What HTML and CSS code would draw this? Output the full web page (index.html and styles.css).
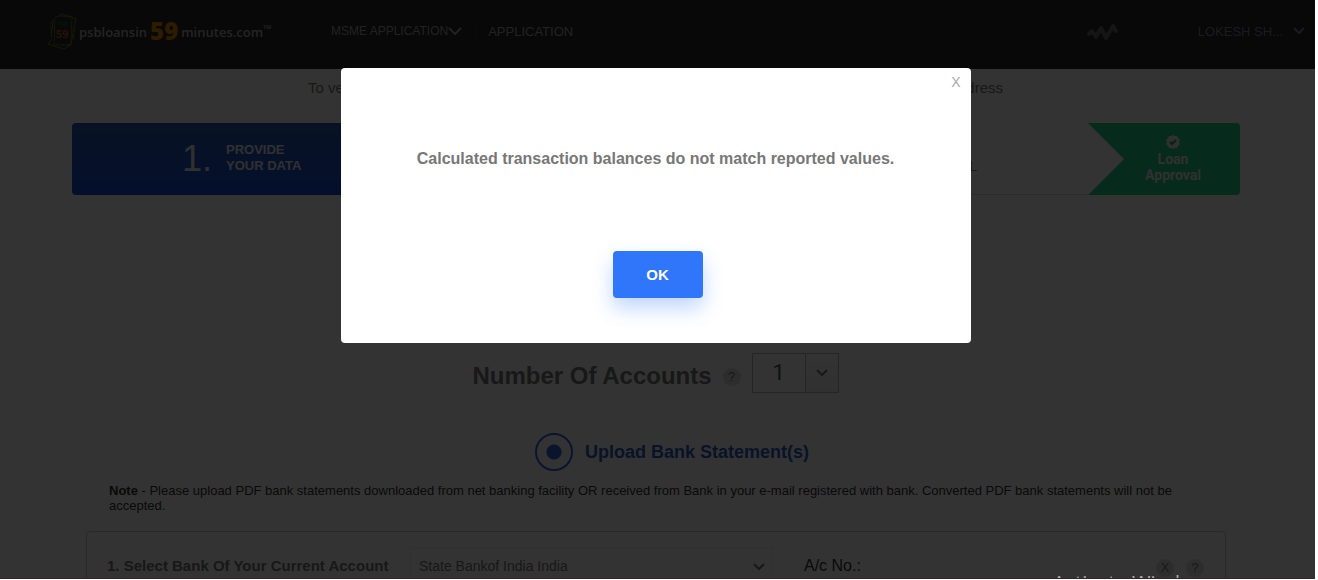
FILE: index.html
```html
<!DOCTYPE html>
<html lang="en">
<head>
<meta charset="utf-8">
<title>psbloansin59minutes.com</title>
<link rel="stylesheet" href="styles.css">
</head>
<body>
<div class="page">
  <header class="topbar">
    <a class="brand" href="#">
      <svg class="brand-mark" viewBox="0 0 30 38" aria-hidden="true">
        <g fill="none" stroke-width="1">
          <path d="M8 4 13 3 25 4 24 33 7 31Z" stroke="#3c7a28"/>
          <path d="M13 3 14 1 25 4 29 6 24 31 20 32M5 26 1 31 17 36 22 33M6 6 4 24" stroke="#7c7820"/>
          <path d="M3 10 4 17M5 9 6 17M26 16 27 28M28 18 26 27" stroke="#80801c" stroke-dasharray="1 2"/>
        </g>
        <text x="16" y="13" class="mark-psb">PSB</text>
        <text x="15" y="25" class="mark-num">59</text>
      </svg>
      <span class="brand-word">psbloansin</span>
      <span class="brand-num">59</span>
      <span class="brand-word">minutes.com<sup class="tm">™</sup></span>
    </a>
    <nav class="menu">
      <a class="menu-main" href="#">MSME APPLICATION<svg class="menu-arrow" viewBox="0 0 14 10" aria-hidden="true"><path d="M1 2 7 8 13 2"/></svg></a>
      <a class="menu-second" href="#">APPLICATION</a>
    </nav>
    <svg class="pulse" viewBox="0 0 32 18" aria-hidden="true"><path d="M3 11 6 8 10 14 15 5 20 15 27 3 30 8"/></svg>
    <button class="user" type="button">LOKESH SH...<svg viewBox="0 0 12 8" aria-hidden="true"><path d="M1 1 6 6 11 1"/></svg></button>
  </header>
  <main>
    <p class="intro"><span>To ve</span><span>dress</span></p>
    <section class="steps">
      <div class="step-provide"><span class="step-no">1.</span><span class="step-name">PROVIDE<br>YOUR DATA</span></div>
      <div class="step-next">L</div>
      <div class="step-loan">
        <svg viewBox="0 0 14 14" aria-hidden="true"><path class="seal" d="M7 0 9 1 11 1 12 3 14 5 13 7 14 9 12 11 11 13 9 13 7 14 5 13 3 13 2 11 0 9 1 7 0 5 2 3 3 1 5 1Z"/><path class="tick" d="M4 7 6 9 10 5"/></svg>
        <span>Loan<br>Approval</span>
      </div>
    </section>
    <section class="accounts">
      <label class="accounts-label" for="count">Number Of Accounts</label>
      <button class="round" type="button">?</button>
      <div class="count-box">
        <select id="count"><option>1</option></select>
        <svg class="chev" viewBox="0 0 12 8" aria-hidden="true"><path d="M1 1 6 6 11 1"/></svg>
      </div>
    </section>
    <label class="upload"><input type="radio" name="method" checked>Upload Bank Statement(s)</label>
    <p class="note"><b>Note</b> - Please upload PDF bank statements downloaded from net banking facility OR received from Bank in your e-mail registered with bank. Converted PDF bank statements will not be accepted.</p>
    <section class="card">
      <label class="bank-label" for="bank">1. Select Bank Of Your Current Account</label>
      <div class="bank-box">
        <select id="bank"><option>State Bankof India India</option></select>
        <svg class="chev" viewBox="0 0 12 8" aria-hidden="true"><path d="M1 1 6 6 11 1"/></svg>
      </div>
      <span class="acno">A/c No.:</span>
      <div class="card-actions">
        <button class="round" type="button">X</button>
        <button class="round" type="button">?</button>
      </div>
    </section>
  </main>
  <div class="overlay">
    <div class="dialog" role="dialog" aria-modal="true" aria-labelledby="message">
      <button class="close" type="button">X</button>
      <p class="message" id="message">Calculated transaction balances do not match reported values.</p>
      <button class="ok" type="button">OK</button>
    </div>
  </div>
  <div class="watermark">Activate Windows</div>
</div>
</body>
</html>
```
FILE: styles.css
```css
* { box-sizing: border-box; }
html, body { height: 100%; }
body {
  margin: 0;
  padding: 0 3px 1px 0;
  background: #fff;
  font-family: "Liberation Sans", Arial, sans-serif;
  overflow: hidden;
}
button, select, input { font: inherit; margin: 0; }
a { color: inherit; text-decoration: none; }
p { margin: 0; }
svg { fill: none; stroke: currentColor; flex: none; }
.page {
  position: relative;
  height: 100%;
  overflow: hidden;
  border-bottom: 1px solid #33262a;
}
.topbar {
  display: flex;
  height: 69px;
  padding-left: 47px;
  padding-right: 10px;
  background: #282828;
  color: #a8a8a8;
}
.brand {
  display: flex;
  align-items: center;
  width: 284px;
  height: 64px;
  font-family: "Open Sans", sans-serif;
  font-weight: 600;
  font-size: 13px;
  color: #b4b4b4;
}
.brand-mark { width: 30px; height: 38px; margin-right: 2px; }
.brand-mark text { stroke: none; text-anchor: middle; font-weight: 700; }
.mark-psb { fill: #0f6a3a; font-size: 5px; }
.mark-num { fill: #b45a10; font-size: 11px; }
.brand-num { margin: 0 3px; padding-bottom: 3px; color: #e08a00; font-size: 24px; font-weight: 800; }
.tm { font-size: 11px; line-height: 0; vertical-align: 4px; }
.menu { display: flex; align-items: center; height: 62px; flex: 1; }
.menu-main { display: flex; align-items: center; font-size: 12px; }
.menu-arrow { width: 14px; height: 10px; stroke-width: 2; }
.menu-second {
  margin-left: 14px;
  padding-left: 11px;
  border-left: 1px solid #333;
  font-size: 13px;
}
.pulse {
  width: 32px;
  height: 18px;
  margin: 23px 80px 0 0;
  color: #686868;
  stroke-width: 4;
  stroke-linecap: round;
  stroke-linejoin: round;
}
.user {
  display: flex;
  align-items: center;
  gap: 10px;
  height: 62px;
  padding: 0;
  border: 0;
  background: none;
  color: #85859c;
  font-size: 13px;
}
.user svg { width: 12px; height: 8px; stroke-width: 2; }
.intro {
  display: flex;
  justify-content: space-between;
  width: 695px;
  margin: 10px auto 26px 308px;
  font-size: 15px;
  line-height: 18px;
  color: #777;
  white-space: nowrap;
}
.steps {
  display: flex;
  height: 72px;
  margin: 0 75px 0 72px;
  border-radius: 4px;
  overflow: hidden;
}
.step-provide {
  display: flex;
  align-items: center;
  gap: 14px;
  width: 400px;
  padding-left: 110px;
  background: linear-gradient(#2a5ab4, #1450d7);
  color: #f0f0f0;
}
.step-no { font-size: 36px; }
.step-name { padding-bottom: 2px; font-size: 13px; line-height: 16px; font-weight: 700; }
.step-next {
  flex: 1;
  padding: 35px 111px 0 0;
  border-bottom: 1px solid #ddd;
  text-align: right;
  font-size: 14px;
  line-height: 16px;
  color: #777;
}
.step-loan {
  width: 152px;
  padding: 12px 0 0 18px;
  background: #1ed28c;
  clip-path: polygon(0 0, 100% 0, 100% 100%, 0 100%, 36px 50%);
  color: #f0f0f0;
  font-family: Roboto, sans-serif;
  font-size: 14px;
  line-height: 16px;
  font-weight: 700;
  text-align: center;
}
.step-loan svg { display: block; width: 14px; height: 14px; margin: 0 auto 2px; }
.seal { fill: #eee; stroke: none; }
.tick { stroke: #1ba56c; stroke-width: 2; }
.accounts {
  display: flex;
  align-items: center;
  justify-content: center;
  margin: 158px 4px 0 0;
}
.accounts-label { font-size: 24px; line-height: 28px; font-weight: 700; color: #777; padding-top: 6px; }
.round {
  width: 18px;
  height: 18px;
  padding: 0;
  border: 0;
  border-radius: 50%;
  background: #e0e0e0;
  color: #777;
  font-size: 13px;
  line-height: 18px;
}
.accounts .round { margin: 8px 11px 0; }
.count-box {
  position: relative;
  display: flex;
  width: 87px;
  height: 40px;
  border: 1px solid #bbb;
}
.count-box::after {
  content: "";
  width: 32px;
  border-left: 1px solid #bbb;
  background: linear-gradient(#fff, #f0f0f0);
}
select {
  appearance: none;
  border: 0;
  background: none;
  flex: 1;
  min-width: 0;
  color: #555;
}
.count-box select { font-family: Roboto, sans-serif; font-size: 22px; text-align: center; padding: 0 0 2px; }
.chev { position: absolute; right: 10px; top: 15px; width: 12px; height: 8px; stroke-width: 2; color: #777; }
.bank-box .chev { right: 7px; }
.upload {
  display: flex;
  align-items: center;
  justify-content: center;
  gap: 12px;
  margin: 40px 0 12px 29px;
  color: #2f5fc8;
  font-size: 18px;
  font-weight: 700;
}
.upload input {
  appearance: none;
  width: 38px;
  height: 38px;
  border: 2px solid #2f67e0;
  border-radius: 50%;
  background: radial-gradient(circle, #2f67e0 7px, transparent 8px);
}
.note { margin: 0 142px 18px 109px; font-size: 13px; line-height: 15px; color: #333; }
.card {
  display: flex;
  align-items: center;
  height: 92px;
  margin: 0 89px 0 86px;
  padding: 0 21px 23px 20px;
  border: 1px solid #ccc;
  border-radius: 4px;
}
.bank-label { width: 303px; font-size: 15px; font-weight: 700; color: #777; }
.bank-box { position: relative; display: flex; width: 363px; height: 38px; border: 1px solid #eee; }
.bank-box select { padding: 0 8px; font-size: 14px; color: #777; }
.acno { flex: 1; margin-left: 31px; font-size: 16px; color: #333; }
.card-actions { display: flex; gap: 12px; padding-top: 5px; }
.overlay {
  position: absolute;
  inset: 0;
  padding: 68px 4px 0 0;
  background: rgba(0, 0, 0, .8);
}
.dialog {
  position: relative;
  display: flex;
  flex-direction: column;
  align-items: center;
  width: 630px;
  max-width: 100%;
  margin: 0 auto;
  padding: 81px 0 45px;
  border-radius: 4px;
  background: #fff;
}
.close {
  position: absolute;
  top: 6px;
  right: 10px;
  padding: 0;
  border: 0;
  background: none;
  color: #aaa;
  font-size: 14px;
}
.message { font-size: 16px; line-height: 20px; font-weight: 700; color: #777; }
.ok {
  width: 90px;
  height: 47px;
  margin: 82px 0 0 4px;
  border: 0;
  border-radius: 4px;
  background: #2f76fa;
  box-shadow: 0 10px 20px rgba(47, 118, 250, .3);
  color: #fff;
  font-size: 15px;
  font-weight: 700;
}
.watermark {
  position: absolute;
  right: 98px;
  bottom: -19px;
  color: #aaa;
  font-family: "Open Sans", sans-serif;
  font-size: 20px;
  line-height: 28px;
}
```
